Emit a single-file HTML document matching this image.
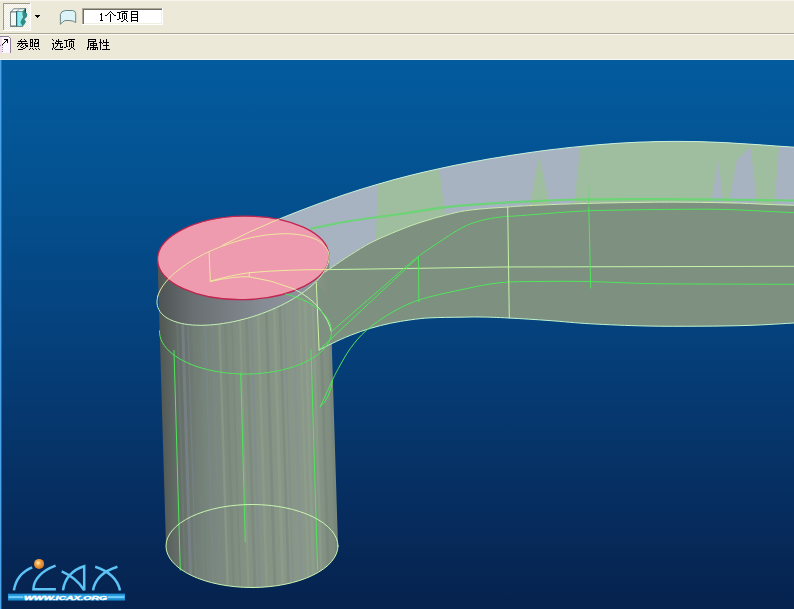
<!DOCTYPE html>
<html><head><meta charset="utf-8"><title>CAD</title>
<style>
html,body{margin:0;padding:0}
body{width:794px;height:609px;overflow:hidden;background:#ece9d8;position:relative;font-family:"Liberation Sans",sans-serif}
</style></head><body>
<svg width="794" height="609" viewBox="0 0 794 609" style="position:absolute;left:0;top:0">
<defs>
<linearGradient id="bg" x1="0" y1="60" x2="0" y2="609" gradientUnits="userSpaceOnUse">
<stop offset="0" stop-color="#035c9e"/><stop offset="0.25" stop-color="#04508f"/><stop offset="0.5" stop-color="#05417c"/><stop offset="0.75" stop-color="#063165"/><stop offset="1" stop-color="#06224e"/></linearGradient>
<linearGradient id="cyl" x1="158" y1="0" x2="338" y2="0" gradientUnits="userSpaceOnUse">
<stop offset="0" stop-color="#4f5552"/><stop offset="0.08" stop-color="#5f6762"/><stop offset="0.25" stop-color="#76837a"/><stop offset="0.5" stop-color="#849284"/><stop offset="0.85" stop-color="#8a9889"/><stop offset="1" stop-color="#7b897c"/></linearGradient>
<linearGradient id="cyltop" x1="158" y1="0" x2="335" y2="0" gradientUnits="userSpaceOnUse">
<stop offset="0" stop-color="#4d5253"/><stop offset="0.2" stop-color="#6a6f72"/><stop offset="0.6" stop-color="#868c94"/><stop offset="1" stop-color="#949ba6"/></linearGradient>
<clipPath id="tb"><path d="M280.0 218.7 C281.3 218.2 285.3 216.5 288.0 215.5 C290.7 214.4 293.3 213.4 296.0 212.3 C298.7 211.3 301.3 210.3 304.0 209.2 C306.7 208.2 309.3 207.2 312.0 206.2 C314.7 205.2 317.3 204.2 320.0 203.2 C322.7 202.3 325.3 201.3 328.0 200.4 C330.7 199.4 333.3 198.5 336.0 197.6 C338.7 196.6 341.3 195.7 344.0 194.8 C346.7 193.9 349.3 193.0 352.0 192.2 C354.7 191.3 357.3 190.5 360.0 189.6 C362.7 188.8 365.3 188.0 368.0 187.2 C370.7 186.3 373.3 185.5 376.0 184.8 C378.7 184.0 381.3 183.2 384.0 182.5 C386.7 181.7 389.3 181.0 392.0 180.2 C394.7 179.5 397.3 178.8 400.0 178.1 C402.7 177.4 405.3 176.7 408.0 176.0 C410.7 175.3 413.3 174.7 416.0 174.0 C418.7 173.4 421.3 172.7 424.0 172.1 C426.7 171.5 429.3 170.9 432.0 170.3 C434.7 169.7 437.3 169.1 440.0 168.5 C442.7 167.9 445.3 167.3 448.0 166.8 C450.7 166.2 453.3 165.7 456.0 165.1 C458.7 164.6 461.3 164.1 464.0 163.6 C466.7 163.0 469.3 162.5 472.0 162.0 C474.7 161.5 477.3 161.0 480.0 160.6 C482.7 160.1 485.3 159.6 488.0 159.1 C490.7 158.7 493.3 158.2 496.0 157.8 C498.7 157.3 501.3 156.9 504.0 156.5 C506.7 156.0 509.3 155.6 512.0 155.2 C514.7 154.8 517.3 154.4 520.0 154.0 C522.7 153.6 525.3 153.2 528.0 152.8 C530.7 152.4 533.3 152.1 536.0 151.7 C538.7 151.3 541.3 151.0 544.0 150.6 C546.7 150.3 549.3 149.9 552.0 149.6 C554.7 149.3 557.3 149.0 560.0 148.7 C562.7 148.3 565.3 148.0 568.0 147.7 C570.7 147.4 573.3 147.2 576.0 146.9 C578.7 146.6 581.3 146.3 584.0 146.1 C586.7 145.8 589.3 145.6 592.0 145.3 C594.7 145.1 597.3 144.9 600.0 144.6 C602.7 144.4 605.3 144.2 608.0 144.0 C610.7 143.8 613.3 143.6 616.0 143.4 C618.7 143.3 621.3 143.1 624.0 142.9 C626.7 142.8 629.3 142.6 632.0 142.5 C634.7 142.4 637.3 142.3 640.0 142.1 C642.7 142.0 645.3 141.9 648.0 141.9 C650.7 141.8 653.3 141.7 656.0 141.6 C658.7 141.6 661.3 141.5 664.0 141.5 C666.7 141.4 669.3 141.4 672.0 141.4 C674.7 141.4 677.3 141.4 680.0 141.4 C682.7 141.4 685.3 141.4 688.0 141.5 C690.7 141.5 693.3 141.5 696.0 141.6 C698.7 141.7 701.3 141.7 704.0 141.8 C706.7 141.9 709.3 142.0 712.0 142.1 C714.7 142.2 717.3 142.3 720.0 142.4 C722.7 142.6 725.3 142.7 728.0 142.8 C730.7 143.0 733.3 143.1 736.0 143.3 C738.7 143.4 741.3 143.6 744.0 143.8 C746.7 143.9 749.3 144.1 752.0 144.3 C754.7 144.5 757.3 144.7 760.0 144.8 C762.7 145.0 765.3 145.2 768.0 145.4 C770.7 145.6 773.3 145.8 776.0 146.0 C778.7 146.1 781.3 146.3 784.0 146.5 C786.7 146.7 790.3 146.9 792.0 147.0 C793.7 147.1 793.7 147.1 794.0 147.1 L794.0 205.3 C789.7 205.2 777.8 204.8 768.0 204.4 C758.2 204.0 749.7 203.4 735.0 203.0 C720.3 202.6 695.8 202.3 680.0 202.2 C664.2 202.1 656.7 202.2 640.0 202.4 C623.3 202.6 598.5 203.1 580.0 203.6 C561.5 204.1 540.8 205.0 528.8 205.6 C516.8 206.2 515.8 206.4 507.7 207.0 C499.6 207.6 488.4 208.2 480.5 209.0 C472.6 209.8 467.1 210.3 460.3 211.6 C453.6 212.9 445.1 215.3 440.0 216.6 C434.9 217.9 434.8 218.0 430.0 219.5 C425.2 221.0 417.5 223.2 411.0 225.6 C404.5 227.9 397.6 230.8 390.9 233.6 C384.2 236.4 377.5 239.2 370.8 242.7 C364.1 246.2 357.0 250.8 350.6 254.8 C344.2 258.8 336.8 264.0 332.5 266.9 C328.2 269.8 326.2 271.1 325.0 272.0 L300 262 L270 225 Z"/></clipPath>
<clipPath id="cb"><path d="M157.5 258 L166 546 A86 41.5 0 0 0 338 546 L329 256 Z"/></clipPath>
</defs>
<rect x="0" y="60" width="794" height="549" fill="url(#bg)"/>
<rect x="0" y="60" width="1.4" height="549" fill="#4aa3e8"/>
<path d="M280.0 218.7 C281.3 218.2 285.3 216.5 288.0 215.5 C290.7 214.4 293.3 213.4 296.0 212.3 C298.7 211.3 301.3 210.3 304.0 209.2 C306.7 208.2 309.3 207.2 312.0 206.2 C314.7 205.2 317.3 204.2 320.0 203.2 C322.7 202.3 325.3 201.3 328.0 200.4 C330.7 199.4 333.3 198.5 336.0 197.6 C338.7 196.6 341.3 195.7 344.0 194.8 C346.7 193.9 349.3 193.0 352.0 192.2 C354.7 191.3 357.3 190.5 360.0 189.6 C362.7 188.8 365.3 188.0 368.0 187.2 C370.7 186.3 373.3 185.5 376.0 184.8 C378.7 184.0 381.3 183.2 384.0 182.5 C386.7 181.7 389.3 181.0 392.0 180.2 C394.7 179.5 397.3 178.8 400.0 178.1 C402.7 177.4 405.3 176.7 408.0 176.0 C410.7 175.3 413.3 174.7 416.0 174.0 C418.7 173.4 421.3 172.7 424.0 172.1 C426.7 171.5 429.3 170.9 432.0 170.3 C434.7 169.7 437.3 169.1 440.0 168.5 C442.7 167.9 445.3 167.3 448.0 166.8 C450.7 166.2 453.3 165.7 456.0 165.1 C458.7 164.6 461.3 164.1 464.0 163.6 C466.7 163.0 469.3 162.5 472.0 162.0 C474.7 161.5 477.3 161.0 480.0 160.6 C482.7 160.1 485.3 159.6 488.0 159.1 C490.7 158.7 493.3 158.2 496.0 157.8 C498.7 157.3 501.3 156.9 504.0 156.5 C506.7 156.0 509.3 155.6 512.0 155.2 C514.7 154.8 517.3 154.4 520.0 154.0 C522.7 153.6 525.3 153.2 528.0 152.8 C530.7 152.4 533.3 152.1 536.0 151.7 C538.7 151.3 541.3 151.0 544.0 150.6 C546.7 150.3 549.3 149.9 552.0 149.6 C554.7 149.3 557.3 149.0 560.0 148.7 C562.7 148.3 565.3 148.0 568.0 147.7 C570.7 147.4 573.3 147.2 576.0 146.9 C578.7 146.6 581.3 146.3 584.0 146.1 C586.7 145.8 589.3 145.6 592.0 145.3 C594.7 145.1 597.3 144.9 600.0 144.6 C602.7 144.4 605.3 144.2 608.0 144.0 C610.7 143.8 613.3 143.6 616.0 143.4 C618.7 143.3 621.3 143.1 624.0 142.9 C626.7 142.8 629.3 142.6 632.0 142.5 C634.7 142.4 637.3 142.3 640.0 142.1 C642.7 142.0 645.3 141.9 648.0 141.9 C650.7 141.8 653.3 141.7 656.0 141.6 C658.7 141.6 661.3 141.5 664.0 141.5 C666.7 141.4 669.3 141.4 672.0 141.4 C674.7 141.4 677.3 141.4 680.0 141.4 C682.7 141.4 685.3 141.4 688.0 141.5 C690.7 141.5 693.3 141.5 696.0 141.6 C698.7 141.7 701.3 141.7 704.0 141.8 C706.7 141.9 709.3 142.0 712.0 142.1 C714.7 142.2 717.3 142.3 720.0 142.4 C722.7 142.6 725.3 142.7 728.0 142.8 C730.7 143.0 733.3 143.1 736.0 143.3 C738.7 143.4 741.3 143.6 744.0 143.8 C746.7 143.9 749.3 144.1 752.0 144.3 C754.7 144.5 757.3 144.7 760.0 144.8 C762.7 145.0 765.3 145.2 768.0 145.4 C770.7 145.6 773.3 145.8 776.0 146.0 C778.7 146.1 781.3 146.3 784.0 146.5 C786.7 146.7 790.3 146.9 792.0 147.0 C793.7 147.1 793.7 147.1 794.0 147.1 L794.0 205.3 C789.7 205.2 777.8 204.8 768.0 204.4 C758.2 204.0 749.7 203.4 735.0 203.0 C720.3 202.6 695.8 202.3 680.0 202.2 C664.2 202.1 656.7 202.2 640.0 202.4 C623.3 202.6 598.5 203.1 580.0 203.6 C561.5 204.1 540.8 205.0 528.8 205.6 C516.8 206.2 515.8 206.4 507.7 207.0 C499.6 207.6 488.4 208.2 480.5 209.0 C472.6 209.8 467.1 210.3 460.3 211.6 C453.6 212.9 445.1 215.3 440.0 216.6 C434.9 217.9 434.8 218.0 430.0 219.5 C425.2 221.0 417.5 223.2 411.0 225.6 C404.5 227.9 397.6 230.8 390.9 233.6 C384.2 236.4 377.5 239.2 370.8 242.7 C364.1 246.2 357.0 250.8 350.6 254.8 C344.2 258.8 336.8 264.0 332.5 266.9 C328.2 269.8 326.2 271.1 325.0 272.0 L300 262 L270 225 Z" fill="#a8b3c1"/>
<g clip-path="url(#tb)" fill="#9fbd9f">
<polygon points="379,150 437,150 447,230 375,260"/>
<polygon points="539,155 529.8,206 550,206"/>
<polygon points="582,130 800,130 800,215 573,215"/>
</g>
<g clip-path="url(#tb)" fill="#a8b3c1">
<polygon points="718.5,160 710.8,204 723.4,204"/>
<polygon points="750.5,147 737,160 728.2,205 757.3,205"/>
<polygon points="779.6,140 800,140 800,210 773.8,210"/>
</g>
<path d="M325.0 272.0 C326.2 271.1 328.2 269.8 332.5 266.9 C336.8 264.0 344.2 258.8 350.6 254.8 C357.0 250.8 364.1 246.2 370.8 242.7 C377.5 239.2 384.2 236.4 390.9 233.6 C397.6 230.8 404.5 227.9 411.0 225.6 C417.5 223.2 425.2 221.0 430.0 219.5 C434.8 218.0 434.9 217.9 440.0 216.6 C445.1 215.3 453.6 212.9 460.3 211.6 C467.1 210.3 472.6 209.8 480.5 209.0 C488.4 208.2 499.6 207.6 507.7 207.0 C515.8 206.4 516.8 206.2 528.8 205.6 C540.8 205.0 561.5 204.1 580.0 203.6 C598.5 203.1 623.3 202.6 640.0 202.4 C656.7 202.2 664.2 202.1 680.0 202.2 C695.8 202.3 720.3 202.6 735.0 203.0 C749.7 203.4 758.2 204.0 768.0 204.4 C777.8 204.8 789.7 205.2 794.0 205.3 L794.0 323.0 C786.5 323.4 764.7 324.9 749.0 325.4 C733.3 325.9 717.2 326.1 700.0 326.2 C682.8 326.3 664.2 326.4 646.0 326.0 C627.8 325.6 606.7 324.7 590.7 323.8 C574.7 322.9 563.6 321.6 550.0 320.6 C536.4 319.6 520.7 318.6 509.0 318.0 C497.3 317.4 488.2 317.1 480.0 317.0 C471.8 316.9 468.2 317.1 460.0 317.2 C451.8 317.3 439.2 317.4 431.0 317.8 C422.8 318.2 417.5 318.9 410.8 319.8 C404.1 320.7 397.4 321.8 390.7 323.2 C384.0 324.6 377.2 326.3 370.5 328.3 C363.8 330.3 356.8 332.8 350.4 335.3 C344.0 337.8 337.4 340.9 332.2 343.4 C327.0 345.8 321.3 348.9 319.1 350.0 L316 283 Z" fill="#7e907f"/>
<path d="M157.5 258 L166 546 A86 41.5 0 0 0 338 546 L329 256 Z" fill="url(#cyl)"/>
<g clip-path="url(#cb)">
<rect x="178.0" y="300" width="2.0" height="300" fill="#74807a" opacity="0.45" transform="skewX(1.8) translate(-12 0)"/>
<rect x="183.0" y="300" width="3.0" height="300" fill="#858da0" opacity="0.45" transform="skewX(1.8) translate(-12 0)"/>
<rect x="189.0" y="300" width="1.5" height="300" fill="#7f8798" opacity="0.45" transform="skewX(1.8) translate(-12 0)"/>
<rect x="194.0" y="300" width="3.0" height="300" fill="#74807a" opacity="0.45" transform="skewX(1.8) translate(-12 0)"/>
<rect x="199.0" y="300" width="2.0" height="300" fill="#74807a" opacity="0.45" transform="skewX(1.8) translate(-12 0)"/>
<rect x="206.0" y="300" width="2.0" height="300" fill="#7f8798" opacity="0.45" transform="skewX(1.8) translate(-12 0)"/>
<rect x="213.0" y="300" width="2.0" height="300" fill="#7f8798" opacity="0.45" transform="skewX(1.8) translate(-12 0)"/>
<rect x="220.0" y="300" width="2.5" height="300" fill="#93a392" opacity="0.45" transform="skewX(1.8) translate(-12 0)"/>
<rect x="226.0" y="300" width="2.5" height="300" fill="#74807a" opacity="0.45" transform="skewX(1.8) translate(-12 0)"/>
<rect x="233.0" y="300" width="1.5" height="300" fill="#74807a" opacity="0.45" transform="skewX(1.8) translate(-12 0)"/>
<rect x="241.0" y="300" width="2.0" height="300" fill="#93a392" opacity="0.45" transform="skewX(1.8) translate(-12 0)"/>
<rect x="247.0" y="300" width="3.0" height="300" fill="#74807a" opacity="0.45" transform="skewX(1.8) translate(-12 0)"/>
<rect x="252.0" y="300" width="2.5" height="300" fill="#7f8798" opacity="0.45" transform="skewX(1.8) translate(-12 0)"/>
<rect x="259.0" y="300" width="2.5" height="300" fill="#93a392" opacity="0.45" transform="skewX(1.8) translate(-12 0)"/>
<rect x="267.0" y="300" width="3.0" height="300" fill="#74807a" opacity="0.45" transform="skewX(1.8) translate(-12 0)"/>
<rect x="275.0" y="300" width="3.0" height="300" fill="#93a392" opacity="0.45" transform="skewX(1.8) translate(-12 0)"/>
<rect x="281.0" y="300" width="2.5" height="300" fill="#74807a" opacity="0.45" transform="skewX(1.8) translate(-12 0)"/>
<rect x="286.0" y="300" width="1.5" height="300" fill="#7f8798" opacity="0.45" transform="skewX(1.8) translate(-12 0)"/>
<rect x="294.0" y="300" width="2.5" height="300" fill="#858da0" opacity="0.45" transform="skewX(1.8) translate(-12 0)"/>
<rect x="301.0" y="300" width="2.0" height="300" fill="#93a392" opacity="0.45" transform="skewX(1.8) translate(-12 0)"/>
<rect x="306.0" y="300" width="3.0" height="300" fill="#93a392" opacity="0.45" transform="skewX(1.8) translate(-12 0)"/>
<rect x="314.0" y="300" width="2.5" height="300" fill="#93a392" opacity="0.45" transform="skewX(1.8) translate(-12 0)"/>
<rect x="321.0" y="300" width="3.0" height="300" fill="#74807a" opacity="0.45" transform="skewX(1.8) translate(-12 0)"/>
<rect x="330.0" y="300" width="2.0" height="300" fill="#74807a" opacity="0.45" transform="skewX(1.8) translate(-12 0)"/>
<rect x="335.0" y="300" width="1.5" height="300" fill="#93a392" opacity="0.45" transform="skewX(1.8) translate(-12 0)"/>
<rect x="342.0" y="300" width="2.0" height="300" fill="#7f8798" opacity="0.45" transform="skewX(1.8) translate(-12 0)"/>
<path d="M329.0 257.1 L328.7 260.7 L327.7 264.4 L326.1 268.2 L323.8 272.1 L320.9 276.1 L317.5 280.1 L313.4 284.0 L308.9 288.0 L303.8 291.9 L298.3 295.7 L292.3 299.3 L286.0 302.9 L279.3 306.2 L272.4 309.3 L265.3 312.2 L257.9 314.9 L250.5 317.3 L243.0 319.4 L235.5 321.2 L228.1 322.7 L220.7 323.8 L213.6 324.7 L206.7 325.1 L200.0 325.3 L193.7 325.0 L187.7 324.5 L182.2 323.6 L177.1 322.3 L172.6 320.7 L168.5 318.8 L165.1 316.7 L162.2 314.2 L159.9 311.5 L158.3 308.5 L157.3 305.3 L157.0 301.9 L157.3 298.3 L158.3 294.6 L159.9 290.8 L162.2 286.9 L165.1 282.9 L168.5 278.9 L172.6 275.0 L177.1 271.0 L182.2 267.1 L187.7 263.3 L193.7 259.7 L200.0 256.1 L206.7 252.8 L213.6 249.7 L220.7 246.8 L228.1 244.1 L235.5 241.7 L243.0 239.6 L250.5 237.8 L257.9 236.3 L265.3 235.2 L272.4 234.3 L279.3 233.9 L286.0 233.7 L292.3 234.0 L298.3 234.5 L303.8 235.4 L308.9 236.7 L313.4 238.3 L317.5 240.2 L320.9 242.3 L323.8 244.8 L326.1 247.5 L327.7 250.5 L328.7 253.7 L329.0 257.1 Z" fill="url(#cyltop)"/>
</g>
<path d="M316 283 L319.1 350 L332.2 343.4 L331 300 Z" fill="#7e907f"/>
<ellipse cx="243.3" cy="257.9" rx="85.7" ry="41.7" transform="rotate(-1.2 243.3 257.9)" fill="#ee9bb0" stroke="#c0244f" stroke-width="1.3"/>
<g fill="none" stroke-width="1" stroke-linecap="round">
<path d="M280.0 218.7 C281.3 218.2 285.3 216.5 288.0 215.5 C290.7 214.4 293.3 213.4 296.0 212.3 C298.7 211.3 301.3 210.3 304.0 209.2 C306.7 208.2 309.3 207.2 312.0 206.2 C314.7 205.2 317.3 204.2 320.0 203.2 C322.7 202.3 325.3 201.3 328.0 200.4 C330.7 199.4 333.3 198.5 336.0 197.6 C338.7 196.6 341.3 195.7 344.0 194.8 C346.7 193.9 349.3 193.0 352.0 192.2 C354.7 191.3 357.3 190.5 360.0 189.6 C362.7 188.8 365.3 188.0 368.0 187.2 C370.7 186.3 373.3 185.5 376.0 184.8 C378.7 184.0 381.3 183.2 384.0 182.5 C386.7 181.7 389.3 181.0 392.0 180.2 C394.7 179.5 397.3 178.8 400.0 178.1 C402.7 177.4 405.3 176.7 408.0 176.0 C410.7 175.3 413.3 174.7 416.0 174.0 C418.7 173.4 421.3 172.7 424.0 172.1 C426.7 171.5 429.3 170.9 432.0 170.3 C434.7 169.7 437.3 169.1 440.0 168.5 C442.7 167.9 445.3 167.3 448.0 166.8 C450.7 166.2 453.3 165.7 456.0 165.1 C458.7 164.6 461.3 164.1 464.0 163.6 C466.7 163.0 469.3 162.5 472.0 162.0 C474.7 161.5 477.3 161.0 480.0 160.6 C482.7 160.1 485.3 159.6 488.0 159.1 C490.7 158.7 493.3 158.2 496.0 157.8 C498.7 157.3 501.3 156.9 504.0 156.5 C506.7 156.0 509.3 155.6 512.0 155.2 C514.7 154.8 517.3 154.4 520.0 154.0 C522.7 153.6 525.3 153.2 528.0 152.8 C530.7 152.4 533.3 152.1 536.0 151.7 C538.7 151.3 541.3 151.0 544.0 150.6 C546.7 150.3 549.3 149.9 552.0 149.6 C554.7 149.3 557.3 149.0 560.0 148.7 C562.7 148.3 565.3 148.0 568.0 147.7 C570.7 147.4 573.3 147.2 576.0 146.9 C578.7 146.6 581.3 146.3 584.0 146.1 C586.7 145.8 589.3 145.6 592.0 145.3 C594.7 145.1 597.3 144.9 600.0 144.6 C602.7 144.4 605.3 144.2 608.0 144.0 C610.7 143.8 613.3 143.6 616.0 143.4 C618.7 143.3 621.3 143.1 624.0 142.9 C626.7 142.8 629.3 142.6 632.0 142.5 C634.7 142.4 637.3 142.3 640.0 142.1 C642.7 142.0 645.3 141.9 648.0 141.9 C650.7 141.8 653.3 141.7 656.0 141.6 C658.7 141.6 661.3 141.5 664.0 141.5 C666.7 141.4 669.3 141.4 672.0 141.4 C674.7 141.4 677.3 141.4 680.0 141.4 C682.7 141.4 685.3 141.4 688.0 141.5 C690.7 141.5 693.3 141.5 696.0 141.6 C698.7 141.7 701.3 141.7 704.0 141.8 C706.7 141.9 709.3 142.0 712.0 142.1 C714.7 142.2 717.3 142.3 720.0 142.4 C722.7 142.6 725.3 142.7 728.0 142.8 C730.7 143.0 733.3 143.1 736.0 143.3 C738.7 143.4 741.3 143.6 744.0 143.8 C746.7 143.9 749.3 144.1 752.0 144.3 C754.7 144.5 757.3 144.7 760.0 144.8 C762.7 145.0 765.3 145.2 768.0 145.4 C770.7 145.6 773.3 145.8 776.0 146.0 C778.7 146.1 781.3 146.3 784.0 146.5 C786.7 146.7 790.3 146.9 792.0 147.0 C793.7 147.1 793.7 147.1 794.0 147.1" stroke="#c9f0d8"/>
<path d="M325.0 272.0 C326.2 271.1 328.2 269.8 332.5 266.9 C336.8 264.0 344.2 258.8 350.6 254.8 C357.0 250.8 364.1 246.2 370.8 242.7 C377.5 239.2 384.2 236.4 390.9 233.6 C397.6 230.8 404.5 227.9 411.0 225.6 C417.5 223.2 425.2 221.0 430.0 219.5 C434.8 218.0 434.9 217.9 440.0 216.6 C445.1 215.3 453.6 212.9 460.3 211.6 C467.1 210.3 472.6 209.8 480.5 209.0 C488.4 208.2 499.6 207.6 507.7 207.0 C515.8 206.4 516.8 206.2 528.8 205.6 C540.8 205.0 561.5 204.1 580.0 203.6 C598.5 203.1 623.3 202.6 640.0 202.4 C656.7 202.2 664.2 202.1 680.0 202.2 C695.8 202.3 720.3 202.6 735.0 203.0 C749.7 203.4 758.2 204.0 768.0 204.4 C777.8 204.8 789.7 205.2 794.0 205.3" stroke="#cdeeb0"/>
<path d="M319.1 350.0 C321.3 348.9 327.0 345.8 332.2 343.4 C337.4 340.9 344.0 337.8 350.4 335.3 C356.8 332.8 363.8 330.3 370.5 328.3 C377.2 326.3 384.0 324.6 390.7 323.2 C397.4 321.8 404.1 320.7 410.8 319.8 C417.5 318.9 422.8 318.2 431.0 317.8 C439.2 317.4 451.8 317.3 460.0 317.2 C468.2 317.1 471.8 316.9 480.0 317.0 C488.2 317.1 497.3 317.4 509.0 318.0 C520.7 318.6 536.4 319.6 550.0 320.6 C563.6 321.6 574.7 322.9 590.7 323.8 C606.7 324.7 627.8 325.6 646.0 326.0 C664.2 326.4 682.8 326.3 700.0 326.2 C717.2 326.1 733.3 325.9 749.0 325.4 C764.7 324.9 786.5 323.4 794.0 323.0" stroke="#bff5d0"/>
<path d="M311.3 228.6 C317.8 227.3 335.2 223.4 350.0 221.0 C364.8 218.6 386.7 215.9 400.0 214.0 C413.3 212.1 420.0 210.8 430.0 209.4 C440.0 208.0 445.0 206.9 460.0 205.6 C475.0 204.3 500.0 202.8 520.0 201.8 C540.0 200.8 560.0 199.9 580.0 199.5 C600.0 199.1 620.0 199.1 640.0 199.1 C660.0 199.1 674.3 199.2 700.0 199.4 C725.7 199.6 778.3 200.3 794.0 200.5" stroke="#62d86c" stroke-width="2.2" opacity="0.85"/>
<path d="M329 269.6 L400 268.6 L500 267 L794 266.3" stroke="#c4f5a8"/>
<path d="M331.0 332.0 C335.0 328.5 346.8 318.1 355.0 311.0 C363.2 303.9 371.7 296.8 380.0 289.5 C388.3 282.2 398.8 272.8 405.0 267.5 C411.2 262.2 413.0 260.6 417.0 257.5 C421.0 254.4 421.8 253.7 429.0 248.9 C436.2 244.1 451.7 233.4 460.3 228.7 C468.9 224.0 473.8 222.6 480.5 220.7 C487.2 218.8 493.9 217.8 500.6 217.0 C507.3 216.2 507.6 216.6 520.8 215.6 C534.0 214.6 562.7 212.1 580.0 211.2 C597.3 210.3 607.7 210.3 624.4 210.0 C641.1 209.7 662.6 209.4 680.0 209.3 C697.4 209.2 710.0 209.0 729.0 209.6 C748.0 210.2 783.2 212.2 794.0 212.7" stroke="#4fe65a"/>
<path d="M794.0 284.3 C778.3 284.2 724.7 284.1 700.0 284.0 C675.3 283.9 664.9 283.9 646.0 283.5 C627.1 283.1 604.5 281.8 586.8 281.5 C569.1 281.2 554.5 281.3 540.0 281.5 C525.5 281.7 513.3 281.3 500.0 282.7 C486.7 284.1 473.5 287.1 460.0 290.0 C446.5 292.9 430.4 296.1 418.9 300.0 C407.3 303.9 399.4 308.1 390.7 313.2 C382.0 318.2 373.2 324.4 366.5 330.3 C359.8 336.2 355.1 342.0 350.4 348.4 C345.7 354.8 341.3 363.2 338.3 368.6 C335.3 374.0 335.2 374.3 332.2 380.7 C329.2 387.1 322.2 402.5 320.2 406.9" stroke="#4fe65a"/>
<path d="M320.2 406.9 Q330 398 332.5 381" stroke="#4fe65a"/>
<path d="M507.7 207 L509.3 318" stroke="#c4f5a8"/>
<path d="M589.1 186 L588.8 205" stroke="#4fe65a" opacity="0.6"/>
<path d="M588.8 207 L590.7 288" stroke="#4fe65a"/>
<path d="M418.5 257 L418.9 302" stroke="#4fe65a"/>
<path d="M319.1 350 L418.5 257" stroke="#4fe65a"/>
<path d="M316.3 282.5 L319.1 350" stroke="#d0f5a8"/>
<path d="M328.2 251.8 L328.7 253.9 L329.0 256.1 L329.0 258.4 L328.7 260.7 L328.1 263.1 L327.2 265.6 L326.1 268.1 L324.7 270.6 L323.1 273.2 L321.2 275.8 L319.0 278.4 L316.6 281.0 L313.9 283.6 L311.0 286.2 L307.9 288.8 L304.6 291.3 L301.1 293.8 L297.4 296.3 L293.5 298.7 L289.4 301.0 L285.2 303.3 L280.9 305.5 L276.4 307.6 L271.8 309.6 L267.2 311.5 L262.4 313.3 L257.6 315.0 L252.8 316.6 L247.9 318.1 L243.0 319.4 L238.1 320.6 L233.2 321.7 L228.4 322.6 L223.6 323.4 L218.8 324.1 L214.2 324.6 L209.6 325.0 L205.1 325.2 L200.8 325.3 L196.6 325.2 L192.5 325.0 L188.6 324.6 L184.9 324.1 L181.4 323.4 L178.1 322.6 L175.0 321.6 L172.1 320.5 L169.4 319.3 L167.0 318.0 L164.8 316.5 L162.9 314.9 L161.3 313.2 L159.9 311.4 L158.8 309.5 L157.9 307.4 L157.3 305.3 L157.0 303.1 L157.0 300.9 L157.3 298.5 L157.8 296.1" stroke="#c6f2b4"/>
<path d="M157.8 296.1 L158.5 294.1 L159.4 292.0 L160.4 289.9 L161.7 287.7 L163.1 285.6 L164.7 283.4 L166.5 281.2 L168.4 279.1 L170.5 276.9 L172.8 274.7 L175.3 272.5 L177.9 270.4 L180.7 268.3 L183.5 266.2 L186.6 264.1 L189.7 262.0 L193.0 260.0 L196.4 258.1 L199.9 256.2 L203.5 254.3 L207.2 252.5 L211.0 250.8 L214.8 249.1 L218.7 247.5 L222.7 246.0 L226.7 244.6 L230.7 243.2 L234.8 241.9 L238.9 240.7 L243.0 239.6 L247.1 238.6 L251.2 237.6 L255.3 236.8 L259.3 236.1 L263.3 235.4 L267.3 234.9 L271.2 234.5 L275.0 234.1 L278.8 233.9 L282.5 233.8 L286.1 233.7 L289.6 233.8 L293.0 234.0 L296.3 234.3 L299.4 234.7 L302.5 235.2 L305.3 235.8 L308.1 236.5 L310.7 237.3 L313.2 238.2 L315.5 239.1 L317.6 240.2 L319.5 241.4 L321.3 242.6 L322.9 244.0 L324.3 245.4 L325.6 246.9 L326.6 248.4 L327.5 250.1 L328.2 251.8" stroke="#f0e8a0"/>
<path d="M279 219 Q250 231 222 245.5" stroke="#f0e8a0"/>
<path d="M209.1 252.9 L210.3 281.1" stroke="#f0e8a0"/>
<path d="M210.3 281.1 Q232 275 249.3 272.7 Q285 269.5 328.3 269.6" stroke="#f0e8a0"/>
<path d="M210.3 281.5 Q235 276 249.3 276.8 Q272 280 293.6 288.8" stroke="#f0e8a0"/>
<path d="M293.6 288.8 Q310 297 319 308 Q330 322 331 331" stroke="#c6f2b4"/>
<path d="M249.3 272.7 L249.3 276.8" stroke="#f0e8a0"/>
<path d="M285.9 294.0 L291.1 295.5 L296.2 297.2 L301.0 299.0 L305.5 301.0 L309.7 303.2 L313.5 305.5 L317.1 307.9 L320.3 310.5 L323.1 313.2 L325.5 315.9 L327.5 318.8 L329.2 321.7 L330.4 324.6 L331.1 327.6 L331.5 330.6 L331.4 333.6 L330.9 336.6 L329.9 339.5 L328.6 342.5 L326.8 345.3 L324.6 348.1 L322.1 350.9 L319.1 353.5 L315.8 356.0 L312.1 358.4 L308.1 360.6 L303.8 362.8 L299.2 364.7 L294.3 366.5 L289.1 368.1 L283.8 369.6 L278.3 370.8 L272.6 371.8 L266.7 372.7 L260.8 373.3 L254.8 373.8 L248.7 374.0 L242.6 374.0 L236.6 373.8 L230.6 373.4 L224.6 372.7 L218.8 371.9 L213.1 370.9 L207.5 369.6 L202.2 368.2 L197.0 366.6 L192.1 364.8 L187.5 362.9 L183.2 360.8 L179.1 358.5 L175.4 356.1 L172.1 353.6 L169.1 351.0 L166.5 348.3 L164.3 345.5 L162.5 342.6 L161.1 339.7 L160.2 336.8 L159.6 333.8 L159.5 330.8" stroke="#4fe65a"/>
<path d="M174 350.5 L180.3 570" stroke="#4fe65a"/>
<path d="M240.7 373 L245.3 542" stroke="#4fe65a"/>
<path d="M311 350 L317.6 570" stroke="#4fe65a"/>
<ellipse cx="252" cy="546" rx="86" ry="41.5" stroke="#c8f5b0"/>
</g>
<g shape-rendering="crispEdges">
<rect x="0" y="0" width="794" height="60" fill="#ece9d8"/>
<rect x="0" y="0" width="794" height="1" fill="#f6f5ee"/>
<rect x="0" y="33" width="794" height="1" fill="#aca899"/>
<rect x="0" y="34" width="794" height="1" fill="#fbfaf5"/>
<rect x="0" y="59" width="794" height="1" fill="#f8f8f4"/>
<defs><pattern id="dith" x="0" y="0" width="2" height="2" patternUnits="userSpaceOnUse"><rect width="2" height="2" fill="#ece9d8"/><rect x="0" y="0" width="1" height="1" fill="#fff"/><rect x="1" y="1" width="1" height="1" fill="#fff"/></pattern></defs>
<rect x="3" y="3" width="28" height="28" fill="url(#dith)"/>
<rect x="3" y="3" width="27" height="1" fill="#9d9a8c"/><rect x="3" y="3" width="1" height="27" fill="#9d9a8c"/>
<rect x="3" y="30" width="28" height="1" fill="#fff"/><rect x="30" y="3" width="1" height="28" fill="#fff"/>
</g>
<g stroke-linejoin="miter">
<polygon points="10.5,13 13.5,8.8 25.5,8.8 22.5,12 10.5,12" fill="#fff" stroke="#66777a" stroke-width="0.9"/>
<rect x="10.5" y="12" width="6" height="14" fill="#f4f7f2" stroke="#6a7b7c" stroke-width="0.9"/>
<polygon points="17,11.5 22.5,11.5 22.5,26.5 17,26.5" fill="#8eebf2"/>
<polygon points="19.5,8.8 25.5,8.8 23,11.5 17,11.5" fill="#e9fbfb" stroke="#59797c" stroke-width="0.7"/>
<rect x="16.2" y="11" width="1" height="15.8" fill="#1d5a62"/>
<path d="M22.5 11.5 L25.6 8.6 L25.8 12.6 L27.2 13.4 L27 16.6 L24.4 19.2 L26 21.8 L24.4 24.4 L22.6 26.5 L21.6 24.4 L20.4 22.4 L21.6 19.6 L23 17.2 L22.4 14.6 Z" fill="#2e8d84"/>
<path d="M24.8 8.6 h1.1 v4.2 h-1.1z" fill="#143c40"/>
<path d="M10.3 26.4 H22.8" stroke="#5d7274" stroke-width="0.9"/>
</g>
<g shape-rendering="crispEdges">
<path d="M35 15h5v1h-5zM36 16h3v1h-3zM37 17h1v1h-1z" fill="#000"/>
</g>
<path d="M60.4 24.4 L60.4 14.4 Q61 11 65.4 10.5 L72.7 10.5 Q75.6 11 75.7 13.4 L75.7 22.6 L73.4 21.2 Q69 20 64.8 20.6 Q62.5 21.6 60.4 24.4 Z" fill="#dcf4f7" stroke="#6a8786" stroke-width="1"/>
<g shape-rendering="crispEdges">
<rect x="82" y="8" width="81" height="17" fill="#fff"/>
<rect x="82" y="8" width="81" height="1" fill="#aca899"/><rect x="82" y="8" width="1" height="17" fill="#aca899"/>
<rect x="83" y="9" width="79" height="1" fill="#716f64"/><rect x="83" y="9" width="1" height="15" fill="#716f64"/>
<rect x="82" y="24" width="81" height="1" fill="#fff"/><rect x="162" y="8" width="1" height="17" fill="#fff"/>
<rect x="84" y="23" width="78" height="1" fill="#f1efe2"/><rect x="161" y="10" width="1" height="14" fill="#f1efe2"/>
<path d="M101 13h1v1h-1zM100 14h2v1h-2zM101 15h1v1h-1zM101 16h1v1h-1zM101 17h1v1h-1zM101 18h1v1h-1zM101 19h1v1h-1zM100 20h3v1h-3z" fill="#000"/>
<path d="M110 11h1v1h-1zM109 12h1v1h-1zM111 12h1v1h-1zM108 13h1v1h-1zM112 13h1v1h-1zM107 14h1v1h-1zM110 14h1v1h-1zM113 14h1v1h-1zM105 15h2v1h-2zM110 15h1v1h-1zM114 15h2v1h-2zM110 16h1v1h-1zM110 17h1v1h-1zM110 18h1v1h-1zM110 19h1v1h-1zM110 20h1v1h-1zM110 21h1v1h-1z" fill="#000"/>
<path d="M121 11h7v1h-7zM117 12h4v1h-4zM124 12h1v1h-1zM119 13h1v1h-1zM122 13h5v1h-5zM119 14h1v1h-1zM122 14h1v1h-1zM126 14h1v1h-1zM119 15h1v1h-1zM122 15h1v1h-1zM124 15h1v1h-1zM126 15h1v1h-1zM119 16h1v1h-1zM122 16h1v1h-1zM124 16h1v1h-1zM126 16h1v1h-1zM119 17h1v1h-1zM122 17h1v1h-1zM124 17h1v1h-1zM126 17h1v1h-1zM119 18h2v1h-2zM122 18h1v1h-1zM124 18h1v1h-1zM126 18h1v1h-1zM117 19h2v1h-2zM124 19h2v1h-2zM123 20h1v1h-1zM126 20h1v1h-1zM121 21h2v1h-2zM127 21h1v1h-1z" fill="#000"/>
<path d="M131 11h7v1h-7zM131 12h1v1h-1zM137 12h1v1h-1zM131 13h1v1h-1zM137 13h1v1h-1zM131 14h7v1h-7zM131 15h1v1h-1zM137 15h1v1h-1zM131 16h1v1h-1zM137 16h1v1h-1zM131 17h7v1h-7zM131 18h1v1h-1zM137 18h1v1h-1zM131 19h1v1h-1zM137 19h1v1h-1zM131 20h7v1h-7zM131 21h1v1h-1zM137 21h1v1h-1z" fill="#000"/>
<path d="M21 39h1v1h-1zM24 39h1v1h-1zM20 40h1v1h-1zM25 40h1v1h-1zM18 41h9v1h-9zM21 42h1v1h-1zM17 43h11v1h-11zM19 44h1v1h-1zM22 44h1v1h-1zM25 44h1v1h-1zM18 45h1v1h-1zM21 45h1v1h-1zM25 45h3v1h-3zM17 46h1v1h-1zM20 46h1v1h-1zM23 46h1v1h-1zM26 46h2v1h-2zM21 47h2v1h-2zM25 47h1v1h-1zM23 48h2v1h-2zM18 49h5v1h-5z" fill="#000"/>
<path d="M30 39h3v1h-3zM34 39h5v1h-5zM30 40h1v1h-1zM32 40h1v1h-1zM35 40h1v1h-1zM38 40h1v1h-1zM30 41h1v1h-1zM32 41h1v1h-1zM35 41h1v1h-1zM38 41h1v1h-1zM30 42h3v1h-3zM34 42h1v1h-1zM37 42h2v1h-2zM30 43h1v1h-1zM32 43h1v1h-1zM34 43h5v1h-5zM30 44h1v1h-1zM32 44h1v1h-1zM34 44h1v1h-1zM38 44h1v1h-1zM30 45h1v1h-1zM32 45h1v1h-1zM34 45h1v1h-1zM38 45h1v1h-1zM30 46h3v1h-3zM34 46h5v1h-5zM30 48h1v1h-1zM32 48h1v1h-1zM35 48h1v1h-1zM38 48h1v1h-1zM29 49h1v1h-1zM33 49h1v1h-1zM36 49h1v1h-1zM39 49h1v1h-1z" fill="#000"/>
<path d="M52 39h1v1h-1zM58 39h1v1h-1zM53 40h1v1h-1zM56 40h1v1h-1zM58 40h1v1h-1zM56 41h6v1h-6zM55 42h1v1h-1zM58 42h1v1h-1zM52 43h2v1h-2zM55 43h8v1h-8zM53 44h1v1h-1zM57 44h1v1h-1zM60 44h1v1h-1zM53 45h1v1h-1zM57 45h1v1h-1zM60 45h1v1h-1zM53 46h1v1h-1zM56 46h1v1h-1zM60 46h1v1h-1zM62 46h1v1h-1zM53 47h1v1h-1zM55 47h1v1h-1zM60 47h3v1h-3zM52 48h1v1h-1zM54 48h1v1h-1zM52 49h1v1h-1zM55 49h8v1h-8z" fill="#000"/>
<path d="M68 39h7v1h-7zM64 40h4v1h-4zM71 40h1v1h-1zM66 41h1v1h-1zM69 41h5v1h-5zM66 42h1v1h-1zM69 42h1v1h-1zM73 42h1v1h-1zM66 43h1v1h-1zM69 43h1v1h-1zM71 43h1v1h-1zM73 43h1v1h-1zM66 44h1v1h-1zM69 44h1v1h-1zM71 44h1v1h-1zM73 44h1v1h-1zM66 45h1v1h-1zM69 45h1v1h-1zM71 45h1v1h-1zM73 45h1v1h-1zM66 46h2v1h-2zM69 46h1v1h-1zM71 46h1v1h-1zM73 46h1v1h-1zM64 47h2v1h-2zM71 47h2v1h-2zM70 48h1v1h-1zM73 48h1v1h-1zM68 49h2v1h-2zM74 49h1v1h-1z" fill="#000"/>
<path d="M88 39h8v1h-8zM88 40h1v1h-1zM95 40h1v1h-1zM88 41h8v1h-8zM88 42h1v1h-1zM93 42h1v1h-1zM88 43h1v1h-1zM90 43h7v1h-7zM88 44h1v1h-1zM90 44h1v1h-1zM93 44h1v1h-1zM96 44h1v1h-1zM88 45h1v1h-1zM90 45h7v1h-7zM88 46h1v1h-1zM93 46h1v1h-1zM87 47h2v1h-2zM90 47h8v1h-8zM87 48h1v1h-1zM90 48h1v1h-1zM93 48h1v1h-1zM95 48h1v1h-1zM97 48h1v1h-1zM87 49h1v1h-1zM90 49h1v1h-1zM92 49h4v1h-4zM97 49h1v1h-1z" fill="#000"/>
<path d="M100 39h1v1h-1zM106 39h1v1h-1zM100 40h1v1h-1zM103 40h1v1h-1zM106 40h1v1h-1zM100 41h1v1h-1zM103 41h1v1h-1zM106 41h1v1h-1zM99 42h3v1h-3zM103 42h6v1h-6zM100 43h1v1h-1zM102 43h1v1h-1zM106 43h1v1h-1zM100 44h1v1h-1zM106 44h1v1h-1zM100 45h1v1h-1zM103 45h6v1h-6zM100 46h1v1h-1zM106 46h1v1h-1zM100 47h1v1h-1zM106 47h1v1h-1zM100 48h1v1h-1zM106 48h1v1h-1zM100 49h1v1h-1zM102 49h8v1h-8z" fill="#000"/>
<rect x="0" y="37" width="10" height="16" fill="#faf6fb"/>
<rect x="0" y="37" width="2" height="16" fill="#f1dcea"/>
<rect x="0" y="36" width="9" height="1" fill="#8f7f9d"/><rect x="9" y="37" width="1" height="1" fill="#8f7f9d"/><rect x="10" y="38" width="1" height="15" fill="#8f7f9d"/>
<path d="M4 39h4v1h-4zM6 40h2v1h-2zM5 41h1v1h-1zM7 41h1v2h-1zM4 42h1v1h-1zM3 43h1v1h-1zM2 44h1v1h-1z" fill="#000"/>
<path d="M0 45h1v1h-1zM2 45h1v1h-1zM2 47h1v1h-1zM2 49h1v1h-1zM2 51h1v1h-1z" fill="#9a8aa8"/>
</g>
<g fill="none" stroke="#5cc3f4" stroke-width="2.5" stroke-linecap="butt">
<path d="M13.9 590.4 C15.5 580 22 571.5 32.2 567.3"/>
<path d="M55.6 565.6 C42 570.5 33.5 579.5 33.4 589.3 L55.9 589.3"/>
<path d="M63 590.4 C64.5 578 73 569.5 84.2 566.2 L84.2 590.4"/>
<path d="M61.7 571.4 C70 575 79 582 84 590"/>
<path d="M93 590.4 C95 579 104 571 117.4 566.8"/>
<path d="M95.2 566.8 C108 571 117.5 579 120 590.4"/>
</g>
<defs><radialGradient id="ball" cx="0.4" cy="0.4" r="0.7"><stop offset="0" stop-color="#fff3c8"/><stop offset="0.35" stop-color="#f3a446"/><stop offset="1" stop-color="#c8701c"/></radialGradient>
<linearGradient id="bar" x1="0" y1="0" x2="0" y2="1"><stop offset="0" stop-color="#1887d0"/><stop offset="0.5" stop-color="#39b0ee"/><stop offset="1" stop-color="#127cc4"/></linearGradient></defs>
<circle cx="39.1" cy="563.9" r="5" fill="url(#ball)"/>
<rect x="8" y="593.6" width="117" height="7" fill="url(#bar)"/>
<rect x="9" y="596.3" width="14" height="1.6" fill="#7fd3fa"/><rect x="108" y="596.3" width="16" height="1.6" fill="#7fd3fa"/>
<text x="24" y="599.6" font-family="Liberation Sans, sans-serif" font-weight="bold" font-style="italic" font-size="5.6" fill="#fff" textLength="83" lengthAdjust="spacingAndGlyphs" stroke="#fff" stroke-width="0.35">WWW.ICAX.ORG</text>
</svg>
</body></html>
